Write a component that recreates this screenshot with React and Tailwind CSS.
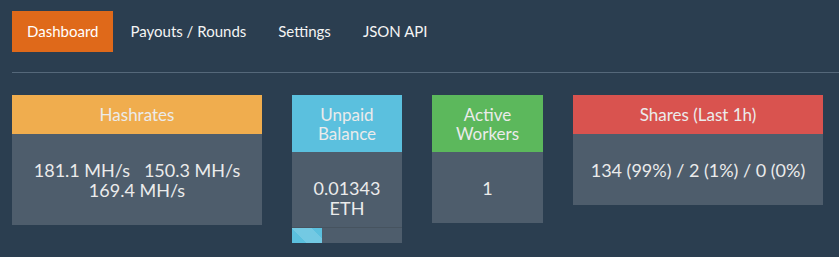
export default function App() {
  const navItems = ["Payouts / Rounds", "Settings", "JSON API"];
  return (
    <div className="w-[839px] h-[257px] bg-[#2b3e50] text-[#ebebeb] overflow-hidden" style={{ fontFamily: "Lato, 'Noto Sans', sans-serif" }}>
      <div className="pt-[11px] pl-[12px]">
        <ul className="flex text-[15px] leading-[21px]">
          <li className="bg-[#df691a] text-white px-[15px] py-[10px]">Dashboard</li>
          {navItems.map((t) => (
            <li key={t} className="ml-[2px] px-[15px] py-[10px] text-[#f4f4f4]">{t}</li>
          ))}
        </ul>
        <div className="mt-[20px] h-px bg-[#55687a]" />
        <div className="mt-[22px] flex items-start gap-[30px]">
          <div className="w-[250px]">
            <div className="h-[39px] bg-[#f0ad4e] flex items-center justify-center text-[17px]">Hashrates</div>
            <div className="h-[91px] bg-[#4e5d6c] flex flex-col items-center justify-center text-[18px] leading-[20px] text-center">
              <div>181.1 MH/s&nbsp;&nbsp; 150.3 MH/s</div>
              <div>169.4 MH/s</div>
            </div>
          </div>
          <div className="w-[110px]">
            <div className="h-[57px] bg-[#5bc0de] flex flex-col items-center justify-center text-[17px] leading-[19px] text-center">
              <div>Unpaid</div>
              <div>Balance</div>
            </div>
            <div className="relative h-[91px] bg-[#4e5d6c] flex flex-col items-center justify-center text-[18px] leading-[20px] text-center">
              <div>0.01343</div>
              <div>ETH</div>
              <div className="absolute left-0 right-0 bottom-0 h-[16px] border-t border-[#46535f] bg-[#4e5d6c]">
                <div className="h-full w-[30px] bg-[#5bc0de] bg-[linear-gradient(45deg,rgba(255,255,255,0.15)_25%,transparent_25%,transparent_50%,rgba(255,255,255,0.15)_50%,rgba(255,255,255,0.15)_75%,transparent_75%,transparent)] bg-[length:40px_40px]" />
              </div>
            </div>
          </div>
          <div className="w-[111px]">
            <div className="h-[57px] bg-[#5cb85c] flex flex-col items-center justify-center text-[17px] leading-[19px] text-center">
              <div>Active</div>
              <div>Workers</div>
            </div>
            <div className="h-[71px] bg-[#4e5d6c] flex items-center justify-center text-[18px] leading-[20px]">1</div>
          </div>
          <div className="w-[250px]">
            <div className="h-[39px] bg-[#d9534f] flex items-center justify-center text-[17px]">Shares (Last 1h)</div>
            <div className="h-[71px] bg-[#4e5d6c] flex items-center justify-center text-[18px] leading-[20px]">134 (99%) / 2 (1%) / 0 (0%)</div>
          </div>
        </div>
      </div>
    </div>
  );
}
